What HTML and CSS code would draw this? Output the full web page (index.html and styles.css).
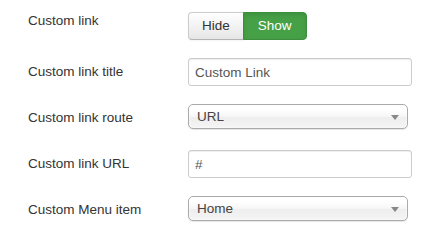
FILE: index.html
```html
<!DOCTYPE html>
<html lang="en">
<head>
    <meta charset="UTF-8">
    <meta name="viewport" content="width=device-width, initial-scale=1.0">
    <title>Custom link</title>
    <link rel="stylesheet" href="styles.css">
</head>
<body>
    <div class="form">
        <div class="row">
            <label class="label label-top">Custom link</label>
            <div class="btn-group">
                <button class="btn">Hide</button>
                <button class="btn btn-success active">Show</button>
            </div>
        </div>
        <div class="row">
            <label class="label">Custom link title</label>
            <input class="input" type="text" value="Custom Link">
        </div>
        <div class="row">
            <label class="label">Custom link route</label>
            <div class="chosen">
                <span>URL</span>
                <b class="arrow"></b>
            </div>
        </div>
        <div class="row">
            <label class="label">Custom link URL</label>
            <input class="input" type="text" value="#">
        </div>
        <div class="row">
            <label class="label">Custom Menu item</label>
            <div class="chosen">
                <span>Home</span>
                <b class="arrow"></b>
            </div>
        </div>
    </div>
</body>
</html>
```

FILE: styles.css
```css
body {
    margin: 0;
    background: #fff;
    font-family: "Liberation Sans", Arial, sans-serif;
    font-size: 13px;
    color: #333;
}
.form {
    padding-top: 12px;
}
.row {
    display: flex;
    align-items: flex-start;
    min-height: 28px;
    margin-bottom: 18px;
}
.label {
    width: 188px;
    flex-shrink: 0;
    box-sizing: border-box;
    padding-left: 28px;
    padding-top: 5px;
    line-height: 18px;
    font-size: 13.5px;
}
.label-top {
    padding-top: 0;
}
.btn-group {
    display: flex;
}
.btn {
    height: 28px;
    margin: 0;
    padding: 0 13px;
    font-family: inherit;
    font-size: 13.5px;
    line-height: 26px;
    color: #333;
    background: linear-gradient(#fff, #e6e6e6);
    border: 1px solid #ccc;
    border-bottom-color: #b3b3b3;
    border-radius: 4px 0 0 4px;
    box-shadow: inset 0 1px 0 rgba(255,255,255,.2), 0 1px 2px rgba(0,0,0,.05);
}
.btn-success.active {
    padding: 0 14px;
    margin-left: -1px;
    color: #fff;
    background: #46a046;
    border-color: #3d8f3d;
    border-radius: 0 4px 4px 0;
    box-shadow: inset 0 2px 4px rgba(0,0,0,.1);
}
.input {
    width: 224px;
    height: 28px;
    box-sizing: border-box;
    margin: 0;
    padding: 0 6px;
    font-family: inherit;
    font-size: 13.5px;
    color: #555;
    border: 1px solid #ccc;
    border-radius: 3px;
    box-shadow: inset 0 1px 1px rgba(0,0,0,.075);
}
.chosen {
    position: relative;
    width: 220px;
    height: 25px;
    box-sizing: border-box;
    padding-left: 8px;
    font-size: 13.5px;
    line-height: 23px;
    color: #444;
    background: linear-gradient(#fff 20%, #f6f6f6 50%, #eee 52%, #f4f4f4 100%);
    border: 1px solid #aaa;
    border-radius: 5px;
    box-shadow: inset 0 0 3px #fff, 0 1px 1px rgba(0,0,0,.1);
}
.arrow {
    position: absolute;
    right: 8px;
    top: 10px;
    border-top: 5px solid #888;
    border-left: 4px solid transparent;
    border-right: 4px solid transparent;
}
```
